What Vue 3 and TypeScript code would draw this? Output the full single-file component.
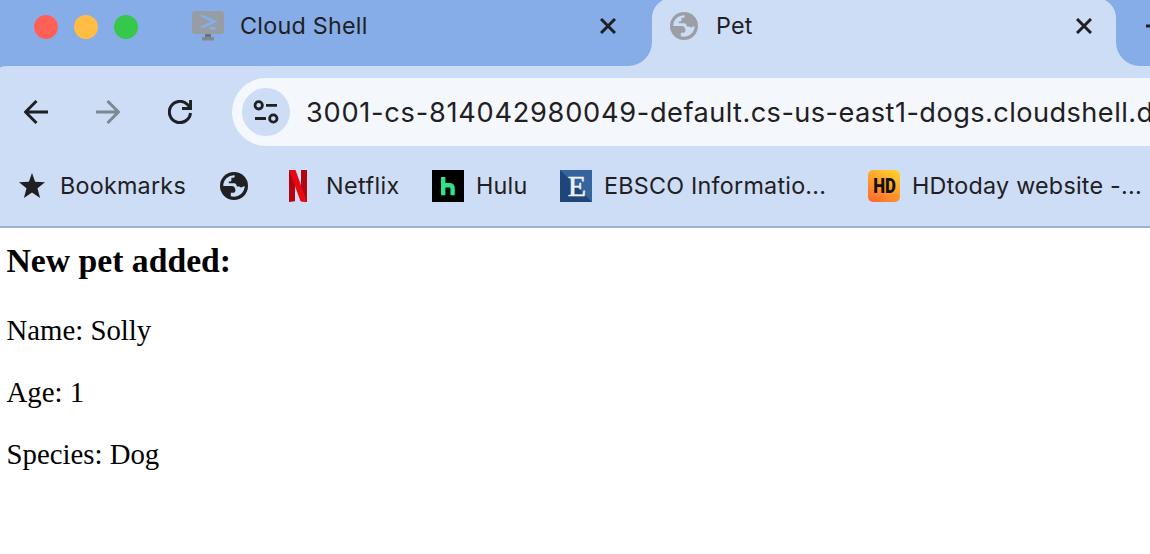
<script setup lang="ts">
type Mark = { id: string; label: string }

const urlId = '3001-cs-814042980049-'
const urlHost = 'default.cs-us-east1-dogs.cloudshell.d'
const marks: Mark[] = [
  { id: 'star', label: 'Bookmarks' },
  { id: 'globe', label: '' },
  { id: 'netflix', label: 'Netflix' },
  { id: 'hulu', label: 'Hulu' },
  { id: 'ebsco', label: 'EBSCO Informatio...' },
  { id: 'hd', label: 'HDtoday website -...' },
]
const globeLand =
  'M3.3 14A10.7 10.7 0 0 1 14.7 3.2V4.6Q14.7 5.7 13.6 5.7H11.4V8.2Q11.4 9.4 10.2 9.4H8.8V11.2H14.2Q16.6 11.4 16.8 14.6H19.4Q20.4 15.8 21.6 15.2L24.7 14A10.7 10.7 0 0 1 10.8 24.2V20.8H13.4Q15.4 20.8 15.4 18.8V17.8Q15 14.2 11.8 14Z'
</script>

<template>
  <div class="window">
    <header class="tabs">
      <div class="lights"><i class="red"></i><i class="yellow"></i><i class="green"></i></div>
      <div class="tab idle">
        <svg class="shell" width="32" height="30" viewBox="0 0 32 30">
          <path fill="#989da3" d="M3 0H29Q32 0 32 3V20Q32 23 29 23H3Q0 23 0 20V3Q0 0 3 0Z" />
          <path fill="#6c7279" d="M13 23H19V26H13Z" />
          <path fill="#838990" d="M10 26H22V29.500H10Z" />
          <path fill="none" stroke="#86ade8" stroke-width="2.700" d="M9 4.500L22.500 10.500L9 16.500" />
          <path fill="#86ade8" d="M17.500 16H23.500V18.700H17.500Z" />
        </svg>
        <span class="label cloud">Cloud Shell</span>
        <svg class="close" width="16" height="16" viewBox="0 0 16 16"><path d="M1 1L15 15M15 1L1 15" /></svg>
      </div>
      <div class="tab active">
        <svg class="globe" width="28" height="28" viewBox="0 0 28 28">
          <circle cx="14" cy="14" r="14" fill="#9b9fa5" /><path :d="globeLand" fill="#ccddf5" />
        </svg>
        <span class="label pet">Pet</span>
        <svg class="close" width="16" height="16" viewBox="0 0 16 16"><path d="M1 1L15 15M15 1L1 15" /></svg>
      </div>
      <div class="rest">
        <svg width="20" height="20" viewBox="0 0 20 20"><path d="M1 10H20M10 1V20" stroke="#1f2023" stroke-width="3" /></svg>
      </div>
    </header>

    <section class="chrome">
      <div class="toolbar">
        <svg class="nav" width="24" height="24" viewBox="0 0 24 24"><path d="M24 12H2M12.500 1L1.500 12L12.500 23" /></svg>
        <svg class="nav dim" width="24" height="24" viewBox="0 0 24 24"><path d="M0 12H22M11.500 1L22.500 12L11.500 23" /></svg>
        <svg class="nav" width="24" height="24" viewBox="0 0 24 24">
          <path d="M22.500 13A10.600 10.600 0 1 1 19.500 4.500L22 7.500" /><path d="M14 8.500H22.600V0" />
        </svg>
        <div class="omnibox">
          <div class="chip">
            <svg width="26" height="24" viewBox="0 0 26 24">
              <circle cx="5.700" cy="5.300" r="3.700" /><circle cx="20.300" cy="18.500" r="3.700" />
              <path d="M13 5.300H24M2 18.500H13" />
            </svg>
          </div>
          <span class="url"><span class="url-id">{{ urlId }}</span>{{ urlHost }}</span>
        </div>
      </div>

      <nav class="marks">
        <div v-for="m in marks" :key="m.id" class="mark" :class="m.id">
          <svg v-if="m.id === 'star'" width="26" height="25" viewBox="0 0 26 25">
            <path fill="#1f2023" d="M13 0L16.100 8.700L26 9.200L18.500 15.300L21.100 25L13 19.600L4.900 25L7.500 15.300L0 9.200L9.900 8.700Z" />
          </svg>
          <svg v-else-if="m.id === 'globe'" width="28" height="28" viewBox="0 0 28 28">
            <circle cx="14" cy="14" r="14" fill="#1f2023" /><path :d="globeLand" fill="#ccddf5" />
          </svg>
          <svg v-else-if="m.id === 'netflix'" width="18" height="32" viewBox="0 0 18 32">
            <path fill="#b1060f" d="M0 0H6V31.200L0 32ZM12 0H18V32L12 31.200Z" />
            <path fill="#e50914" d="M0 0H6.500L18 32L11.500 31.200Z" />
          </svg>
          <svg v-else-if="m.id === 'hulu'" width="32" height="32" viewBox="0 0 32 32">
            <path fill="#000" d="M0 0H32V32H0Z" />
            <path fill="none" stroke="#2de486" stroke-width="4.400" d="M11.200 7V25.300M11.200 15.200H17.500Q20.600 15.200 20.600 18.500V25.300" />
          </svg>
          <svg v-else-if="m.id === 'ebsco'" width="32" height="32" viewBox="0 0 32 32">
            <path fill="#35649f" d="M0 0H32V32H0Z" /><path fill="#1f467b" d="M0 0L32 32H0Z" />
            <text x="17" y="26" text-anchor="middle" class="serif-e">E</text>
          </svg>
          <div v-else class="hd-tile"><span>HD</span></div>
          <span v-if="m.label" class="label">{{ m.label }}</span>
        </div>
      </nav>
    </section>

    <main class="page">
      <h3>New pet added:</h3>
      <p>Name: Solly</p>
      <p>Age: 1</p>
      <p>Species: Dog</p>
    </main>
  </div>
</template>

<style>
body { margin: 0; background: #fff; overflow: hidden; }
</style>

<style scoped>
.window { width: 1150px; height: 554px; overflow: hidden; background: #86ade8; color: #1f2023; font-family: Inter, Roboto, sans-serif; }
svg { display: block; flex: none; }
.label { font-size: 23.3px; line-height: 32px; letter-spacing: .25px; white-space: nowrap; }
.tabs { display: flex; height: 66px; background: linear-gradient(#86ade8 0 20px, #ccddf5 20px); }
.lights { display: flex; flex: none; gap: 16px; box-sizing: border-box; width: 176px; padding: 15px 0 0 34px; background: #86ade8; }
.lights i { width: 24px; height: 24px; border-radius: 50%; }
.red { background: #ff6159; }
.yellow { background: #ffbd43; }
.green { background: #35c84a; }
.tab { display: flex; flex: none; box-sizing: border-box; }
.idle { width: 476px; padding: 11px 36px 0 16px; background: #86ade8; border-bottom-right-radius: 24px; }
.idle .label { margin: -1px 0 0 16px; }
.tab .close { margin: 7px 0 0 auto; }
.close path { fill: none; stroke: #1f2023; stroke-width: 3; }
.active { width: 464px; height: 68px; margin-top: -2px; padding: 14px 24px 0 18px; background: #ccddf5; border-radius: 20px 20px 0 0; }
.active .label { margin: -2px 0 0 18px; }
.tab.active .close { margin-top: 6px; }
.rest { box-sizing: border-box; width: 34px; padding: 16px 0 0 29px; background: #86ade8; border-bottom-left-radius: 24px; overflow: hidden; }
.chrome { box-sizing: border-box; height: 162px; background: #ccddf5; border-bottom: 2px solid #9fb1cc; border-top-left-radius: 8px 2px; }
.toolbar { display: flex; align-items: center; height: 68px; padding: 12px 0 0 24px; }
.nav path { fill: none; stroke: #1f2023; stroke-width: 3; }
.nav + .nav { margin-left: 48px; }
.dim { opacity: .45; }
.omnibox { display: flex; flex: 1; align-items: center; overflow: hidden; height: 68px; margin-left: 40px; padding-left: 10px; border-radius: 34px 0 0 34px; background: #f4f7fc; }
.chip { display: flex; flex: none; align-items: center; justify-content: center; width: 48px; height: 48px; border-radius: 50%; background: #ccddf5; }
.chip circle, .chip path { fill: none; stroke: #1f2023; stroke-width: 2.8; }
.url { margin: 2px 0 0 16px; font-size: 27.2px; line-height: 40px; letter-spacing: .43px; white-space: nowrap; }
.url-id { letter-spacing: .73px; }
.marks { display: flex; align-items: center; height: 80px; padding-left: 19px; }
.mark { display: flex; flex: none; align-items: center; height: 32px; }
.star { width: 201px; gap: 15px; }
.star svg { margin-top: -1px; }
.mark.globe { width: 69px; }
.netflix { width: 143px; gap: 19px; }
.netflix .label { letter-spacing: .4px; }
.hulu { width: 128px; gap: 12px; }
.ebsco { width: 308px; gap: 12px; }
.hd { gap: 12px; }
.serif-e { font: 30px "Liberation Serif", serif; fill: #edf2f7; stroke: #edf2f7; stroke-width: .6px; }
.hd-tile { display: flex; align-items: center; justify-content: center; width: 32px; height: 32px; border-radius: 5px; background: linear-gradient(30deg, #ff6a2c 5%, #ff9d2d 50%, #ffd02e 95%); }
.hd-tile span { font: 900 20px/32px Roboto, sans-serif; color: #111; transform: scaleX(.84); }
.page { box-sizing: border-box; height: 326px; padding: 14px 6.5px; background: #fff; font: 28.8px/33px "Liberation Serif", serif; color: #000; }
.page h3 { margin: 0 0 34px; font-size: 33.7px; line-height: 38px; }
.page p { margin: 0 0 29px; }
</style>
